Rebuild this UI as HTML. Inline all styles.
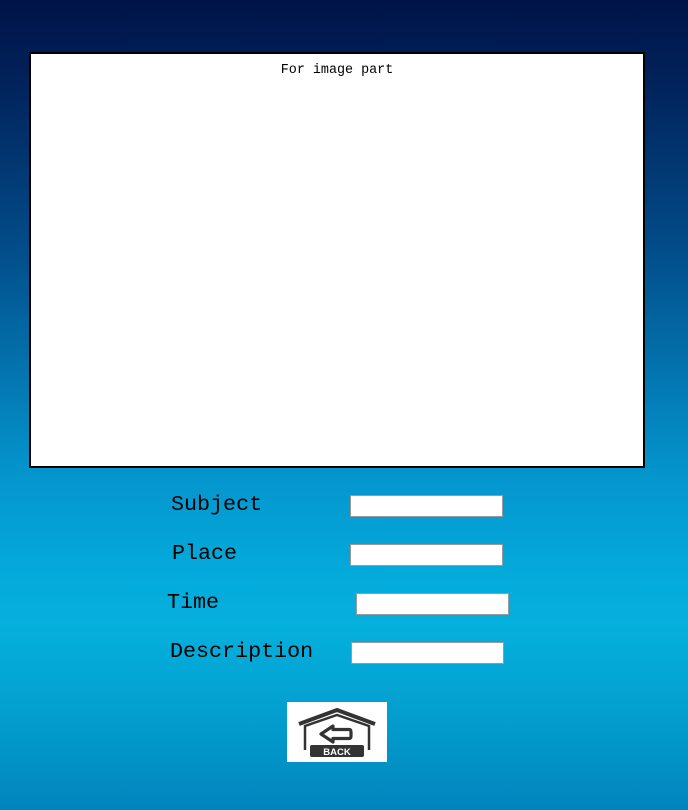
<!DOCTYPE html>
<html><head><meta charset="utf-8"><style>
html,body{margin:0;padding:0}
body{width:688px;height:810px;position:relative;overflow:hidden;
background:linear-gradient(180deg,#001448 0%,#01225a 10%,#024b88 30%,#0372ad 45%,#0494cc 58%,#04a9da 70%,#05b0dd 77%,#039fcf 88%,#0184bd 100%);
font-family:"Liberation Mono",monospace;}
.box{position:absolute;left:29px;top:52px;width:612px;height:412px;background:#fff;border:2px solid #000}
.cap{position:absolute;left:0;right:0;top:9px;text-align:center;font-size:13.4px;color:#000}
.lbl{position:absolute;font-size:21.7px;color:#000;line-height:1}
.in{position:absolute;width:150px;height:20px;background:#fff;border:1px solid #999;box-sizing:border-box}
.back{position:absolute;left:287px;top:702px;width:100px;height:60px;background:#fff}
</style></head><body>
<div class="box"><div class="cap">For image part</div></div>
<div class="lbl" style="left:171px;top:494px">Subject</div>
<div class="lbl" style="left:172px;top:543px">Place</div>
<div class="lbl" style="left:167px;top:592px">Time</div>
<div class="lbl" style="left:170px;top:641px">Description</div>
<div class="in" style="left:350px;top:495px;width:153px;height:22px"></div>
<div class="in" style="left:350px;top:544px;width:153px;height:22px"></div>
<div class="in" style="left:356px;top:593px;width:153px;height:22px"></div>
<div class="in" style="left:351px;top:642px;width:153px;height:22px"></div>
<div class="back"><svg width="100" height="60" viewBox="0 0 100 60">
<polyline points="12,22 50,8 88,22" fill="none" stroke="#333" stroke-width="4"/>
<polyline points="18,48 18,24 50,13 82,24 82,48" fill="none" stroke="#333" stroke-width="2.5"/>
<path d="M34,32 L46,24 L46,27.5 L62,27.5 Q64,27.5 64,30 L64,34 Q64,36.5 62,36.5 L46,36.5 L46,40 Z" fill="#fff" stroke="#333" stroke-width="3.2" stroke-linejoin="round"/>
<rect x="23" y="43" width="54" height="12" rx="2" fill="#333"/>
<text x="50" y="53" text-anchor="middle" font-family="Liberation Sans,sans-serif" font-weight="bold" font-size="9.5" fill="#fff">BACK</text>
</svg></div>
</body></html>
